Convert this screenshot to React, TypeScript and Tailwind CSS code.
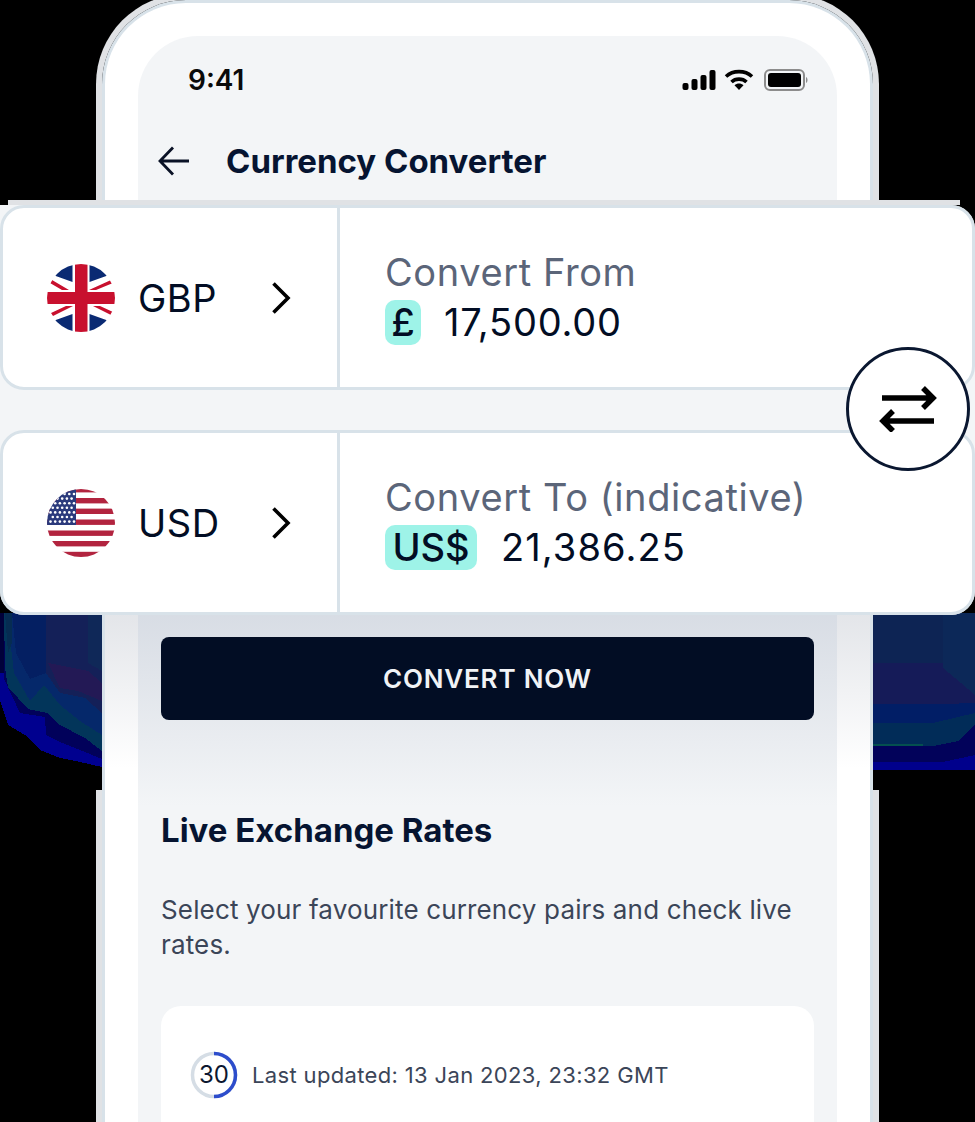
import React from "react";

function UkFlag() {
  return (
    <svg width="68" height="68" viewBox="0 0 68 68" className="shrink-0">
      <defs>
        <clipPath id="ukClip"><circle cx="34" cy="34" r="34" /></clipPath>
      </defs>
      <g clipPath="url(#ukClip)">
        <rect width="68" height="68" fill="#fff" />
        <path d="M25.5 0 V18 L6 11 L12 0 Z M42.5 0 V18 L62 11 L56 0 Z M25.5 68 V50 L6 57 L12 68 Z M42.5 68 V50 L62 57 L56 68 Z" fill="#0a2a73" />
        <path d="M3 19 L5 16 L22 26 H15 Z M64 16 L66 19 L49 26 H42 Z M4 49 L6 52 L26 42 H19 Z M64 51 L66 48 L53 42 H46 Z" fill="#c8102e" />
        <rect x="28" width="12.5" height="68" fill="#c8102e" />
        <rect y="28" width="68" height="12" fill="#c8102e" />
      </g>
    </svg>
  );
}

function UsFlag() {
  const stripes = [-2, 9, 19.6, 30.5, 41.5, 52, 62.8];
  const stars: number[][] = [];
  for (let row = 0; row < 7; row++) {
    for (let col = 0; col < 6; col++) {
      const x = 3.5 + col * 4.7 + (row % 2 ? 2.3 : 0);
      const y = 5 + row * 4.6;
      if (x < 27.5) stars.push([x, y]);
    }
  }
  return (
    <svg width="68" height="68" viewBox="0 0 68 68" className="shrink-0">
      <defs>
        <clipPath id="usClip"><circle cx="34" cy="34" r="34" /></clipPath>
      </defs>
      <g clipPath="url(#usClip)">
        <rect width="68" height="68" fill="#fff" />
        {stripes.map((y) => (
          <rect key={y} y={y} width="68" height="5.4" fill="#b2243f" />
        ))}
        <rect width="29" height="36" fill="#2b3a7c" />
        {stars.map(([x, y], i) => (
          <circle key={i} cx={x} cy={y} r="1.3" fill="#fff" />
        ))}
      </g>
    </svg>
  );
}

function Chevron() {
  return (
    <svg width="22" height="34" viewBox="0 0 22 34" fill="none" className="shrink-0">
      <path d="M3.5 2.5 L18 17 L3.5 31.5" stroke="#000" strokeWidth="3.6" />
    </svg>
  );
}

function CurrencyCard({ flag, code, label, symbol, amount, pill, spacing }: { flag: React.ReactNode; code: string; label: string; symbol: string; amount: string; pill: string; spacing: string }) {
  return (
    <div className="flex h-[185px] w-full rounded-[24px] border-[3px] border-[#d8e2e9] bg-white">
      <div className="flex w-[337px] items-center border-r-[3px] border-[#d8e2e9] pl-[44px]">
        {flag}
        <span className="ml-[23px] w-[132px] text-[38px] leading-none tracking-[0.5px] text-[#020d24]">{code}</span>
        <Chevron />
      </div>
      <div className="flex flex-col pl-[45px] pt-[42px]">
        <div className="text-[38px] leading-[44px] tracking-[0.6px] text-[#5b6579]">{label}</div>
        <div className="mt-[6px] flex items-center">
          <span className={`flex h-[45px] items-center justify-center rounded-[10px] bg-[#9ef3e8] text-[38px] font-medium text-[#020d24] ${pill}`}>{symbol}</span>
          <span className={`text-[38px] leading-[45px] text-[#020d24] ${spacing}`}>{amount}</span>
        </div>
      </div>
    </div>
  );
}

function StatusIcons() {
  return (
    <div className="flex items-center">
      <svg width="34" height="20" viewBox="0 0 34 20" fill="#000">
        <rect x="0.5" y="13" width="6" height="7" rx="2" />
        <rect x="9.5" y="9" width="6" height="11" rx="2" />
        <rect x="18.5" y="5" width="6" height="15" rx="2" />
        <rect x="27.5" y="0" width="6" height="20" rx="2" />
      </svg>
      <svg width="30" height="22" viewBox="0 0 30 22" fill="none" className="ml-[8px]">
        <path d="M2 7.5 C9 1 21 1 28 7.5" stroke="#000" strokeWidth="3.6" />
        <path d="M7.5 13 C11.5 9.2 18.5 9.2 22.5 13" stroke="#000" strokeWidth="3.6" />
        <path d="M10.5 16.2 L15 21 L19.5 16.2 C17 14 13 14 10.5 16.2 Z" fill="#000" />
      </svg>
      <svg width="44" height="22" viewBox="0 0 44 22" fill="none" className="ml-[10px]">
        <rect x="1" y="1" width="39" height="20" rx="5" stroke="#8c8c8c" strokeWidth="2" />
        <rect x="4" y="4" width="33" height="14" rx="3" fill="#000" />
        <path d="M42 8 C44 9 44 13 42 14 Z" fill="#8c8c8c" />
      </svg>
    </div>
  );
}

function LeftSmear() {
  return (
    <svg width="102" height="177" viewBox="0 0 102 177" className="block" shapeRendering="crispEdges">
      <rect width="102" height="177" fill="#000" />
      <path d="M0 0 H4 V60 H0 Z" fill="#01013a" />
      <path d="M0 60 H102 V154 L80 149 L60 145 L40 137 L25 122 L8 112 L0 87 Z" fill="#00008f" />
      <path d="M4 0 H102 V146 L80 137 L60 129 L46 122 L45 104 L20 100 L4 66 Z" fill="#01015a" />
      <path d="M4 0 H102 V138 L85 125 L60 112 L47 100 L28 96 L8 74 L5 55 Z" fill="#02355a" />
      <path d="M7 0 H102 V122 L80 108 L60 92 L44 72 L30 88 L14 60 Z" fill="#05286a" />
      <path d="M12 0 H46 V60 L30 66 L16 40 Z" fill="#041f62" />
      <path d="M46 0 H102 V100 L85 85 L60 80 L46 60 Z" fill="#142058" />
      <path d="M48 50 L88 58 L102 70 V88 L78 78 L60 75 Z" fill="#231955" />
      <path d="M88 0 H102 V58 L88 50 Z" fill="#0f2858" />
      <path d="M5 0 H12 V30 L8 40 Z" fill="#062c52" />
    </svg>
  );
}

function RightSmear() {
  return (
    <svg width="102" height="177" viewBox="0 0 102 177" className="block" shapeRendering="crispEdges">
      <rect width="102" height="177" fill="#000" />
      <rect width="102" height="157" fill="#00008c" />
      <path d="M0 0 H102 V142 L70 149 H0 Z" fill="#02025a" />
      <path d="M0 0 H102 V112 L85 128 L60 133 H0 Z" fill="#012c58" />
      <rect y="131" width="50" height="2" fill="#04504f" />
      <path d="M0 0 H102 V100 L60 110 H0 Z" fill="#011e66" />
      <path d="M0 0 H102 V90 L70 91 H0 Z" fill="#151b58" />
      <path d="M0 0 H102 V52 L70 50 H0 Z" fill="#0d2454" />
      <path d="M70 0 H102 V82 L88 70 L70 55 Z" fill="#0c2858" />
    </svg>
  );
}

export default function App() {
  return (
    <div className="relative h-[1122px] w-[975px] overflow-hidden bg-black font-[Inter,sans-serif]">
      {/* phone */}
      <div className="mx-auto h-[1200px] w-[771px] rounded-t-[84px] border-[3px] border-b-0 border-[#d8e2e9] bg-[linear-gradient(to_bottom,#ffffff_610px,#e3e5e9_610px,#ffffff_765px)] px-[33px] pt-[33px] shadow-[0_0_0_6px_#e0e2e5]">
        <div className="h-[1200px] rounded-t-[60px] bg-[linear-gradient(to_bottom,#f3f5f7_574px,#d7dce4_574px,#f3f5f7_770px)] px-[23px]">
          <div className="flex items-center justify-between pl-[27px] pr-[6px] pt-[28px]">
            <span className="text-[28px] font-semibold leading-[32px] text-[#0a0a0a]">9:41</span>
            <StatusIcons />
          </div>
          <div className="ml-[-3px] mt-[45px] flex items-center">
            <svg width="32" height="30" viewBox="0 0 32 30" fill="none" className="shrink-0">
              <path d="M31 15 H3 M15 1.5 L2 15 L15 28.5" stroke="#0a1226" strokeWidth="2.8" />
            </svg>
            <span className="ml-[36px] text-[33px] font-bold leading-[40px] text-[#061431]">Currency Converter</span>
          </div>
          <button className="mt-[456px] flex h-[83px] w-full items-center justify-center rounded-[8px] bg-[#020d24] text-[26px] font-semibold tracking-[0.8px] text-[#f1f3f6]">CONVERT NOW</button>
          <div className="mt-[90px] text-[33px] font-bold leading-[40px] text-[#061431]">Live Exchange Rates</div>
          <p className="mt-[42px] text-[26px] leading-[35px] tracking-[0.15px] text-[#3b4558]">Select your favourite currency pairs and check live rates.</p>
          <div className="mt-[44px] h-[200px] rounded-[20px] bg-white px-[29px] pt-[45px]">
            <div className="flex items-center">
              <div className="relative flex h-[48px] w-[48px] shrink-0 items-center justify-center text-[24px] text-[#0c1730]">
                <svg width="48" height="48" viewBox="0 0 48 48" fill="none" className="absolute left-0 top-0">
                  <circle cx="24" cy="24" r="21.5" stroke="#d5dde5" strokeWidth="3.5" />
                  <path d="M24 2.5 A21.5 21.5 0 0 1 24 45.5" stroke="#2d4dcc" strokeWidth="3.5" />
                </svg>
                30
              </div>
              <span className="ml-[14px] text-[22px] tracking-[0.35px] text-[#3b4558]">Last updated: 13 Jan 2023, 23:32 GMT</span>
            </div>
          </div>
        </div>
      </div>

      {/* colour smears either side of the phone */}
      <div className="absolute left-0 top-[613px]"><LeftSmear /></div>
      <div className="absolute right-0 top-[613px]"><RightSmear /></div>

      {/* grey edge above the cards */}
      <div className="absolute left-[8px] top-[200px] h-[5px] w-[952px] bg-[#e0e2e5]" />

      {/* floating cards */}
      <div className="absolute left-0 top-[205px] flex w-[975px] flex-col gap-[40px] rounded-tr-[24px] rounded-b-[24px] bg-[#f3f5f7]">
        <CurrencyCard flag={<UkFlag />} code="GBP" label="Convert From" symbol="£" amount="17,500.00" pill="w-[36px] mr-[23px]" spacing="tracking-[0.8px]" />
        <CurrencyCard flag={<UsFlag />} code="USD" label="Convert To (indicative)" symbol="US$" amount="21,386.25" pill="w-[92px] mr-[24px]" spacing="tracking-[1.1px]" />
      </div>

      {/* swap button */}
      <div className="absolute left-[846px] top-[347px] flex h-[124px] w-[124px] items-center justify-center rounded-full border-[3px] border-[#0a1730] bg-white">
        <svg width="58" height="46" viewBox="0 0 58 46" fill="none">
          <path d="M3 12 H54 M44 2 L54 12 L44 22" stroke="#000" strokeWidth="5.5" />
          <path d="M55 35 H4 M14 25 L4 35 L14 45" stroke="#000" strokeWidth="5.5" />
        </svg>
      </div>
    </div>
  );
}
